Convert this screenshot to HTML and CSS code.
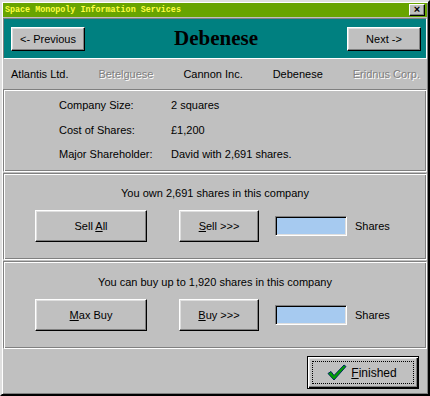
FILE: index.html
```html
<!DOCTYPE html>
<html>
<head>
<meta charset="utf-8">
<link rel="stylesheet" href="styles.css">
</head>
<body>
<div class="window">
  <div class="titlebar">
    <span class="title">Space Monopoly Information Services</span>
    <span class="close">×</span>
  </div>
  <div class="header">
    <button class="btn nav">&lt;- Previous</button>
    <h1 class="company">Debenese</h1>
    <button class="btn nav">Next -&gt;</button>
  </div>
  <div class="tabs">
    <span class="tab">Atlantis Ltd.</span>
    <span class="tab disabled">Betelguese</span>
    <span class="tab">Cannon Inc.</span>
    <span class="tab">Debenese</span>
    <span class="tab disabled">Eridnus Corp.</span>
  </div>
  <div class="panel info">
    <span class="label">Company Size:</span><span>2 squares</span>
    <span class="label">Cost of Shares:</span><span>£1,200</span>
    <span class="label">Major Shareholder:</span><span>David with 2,691 shares.</span>
  </div>
  <div class="panel trade">
    <p class="msg">You own 2,691 shares in this company</p>
    <div class="actions">
      <button class="btn big"><span>Sell <u>A</u>ll</span></button>
      <button class="btn mid"><span><u>S</u>ell &gt;&gt;&gt;</span></button>
      <span class="field"></span>
      <span class="unit">Shares</span>
    </div>
  </div>
  <div class="panel trade buy">
    <p class="msg">You can buy up to 1,920 shares in this company</p>
    <div class="actions">
      <button class="btn big"><span><u>M</u>ax Buy</span></button>
      <button class="btn mid"><span><u>B</u>uy &gt;&gt;&gt;</span></button>
      <span class="field"></span>
      <span class="unit">Shares</span>
    </div>
  </div>
  <div class="footer">
    <button class="btn default">
      <span class="focus">
        <svg class="check" width="20" height="17" viewBox="0 0 20 17">
          <path d="M1 9.5 L4 7.5 L7 11.5 L17 1 L19 2.5 L7 16 Z" fill="#00a000" stroke="#002860" stroke-width="1"/>
        </svg>
        <span><u>F</u>inished</span>
      </span>
    </button>
  </div>
</div>
</body>
</html>
```

FILE: styles.css
```css
* { box-sizing: border-box; }
html, body { margin: 0; padding: 0; }
body {
  width: 430px;
  height: 396px;
  background: #c0c0c0;
  font-family: "Liberation Sans", Arial, sans-serif;
  font-size: 11px;
  color: #000;
  overflow: hidden;
}
.window {
  width: 430px;
  height: 396px;
  border: 2px solid;
  border-color: #dfdfdf #000 #000 #dfdfdf;
  box-shadow: inset 1px 1px #fff, inset -1px -1px #808080;
  padding: 1px;
  display: flex;
  flex-direction: column;
}
.titlebar {
  height: 14px;
  flex: none;
  background: #68a400;
  display: flex;
  align-items: center;
  justify-content: space-between;
  padding: 0 2px 0 2px;
}
.title {
  font-family: "Liberation Mono", "Courier New", monospace;
  font-weight: bold;
  font-size: 8.4px;
  color: #ffff40;
}
.close {
  width: 16px;
  height: 12px;
  background: #c0c0c0;
  border: 1px solid;
  border-color: #fff #000 #000 #fff;
  box-shadow: inset -1px -1px #808080;
  font-size: 11px;
  line-height: 9px;
  text-align: center;
  font-weight: bold;
}
.header {
  flex: none;
  height: 41px;
  margin-top: 1px;
  background: #008080;
  border: 1px solid;
  border-color: #808080 #fff #fff #808080;
  display: flex;
  align-items: center;
  justify-content: space-between;
  padding: 0 5px 0 7px;
}
.company {
  margin: 0;
  font-family: "Liberation Serif", "Times New Roman", serif;
  font-size: 21px;
  font-weight: bold;
  color: #000;
}
.btn {
  font-family: "Liberation Sans", Arial, sans-serif;
  font-size: 11px;
  color: #000;
  background: #c0c0c0;
  border: 1px solid;
  border-color: #fff #000 #000 #fff;
  box-shadow: inset -1px -1px #808080, inset 1px 1px #dfdfdf;
  padding: 0;
  margin: 0;
  display: flex;
  align-items: center;
  justify-content: center;
}
.nav { width: 74px; height: 24px; }
.tabs {
  flex: none;
  height: 30px;
  display: flex;
  align-items: center;
  justify-content: space-between;
  padding: 0 7px 0 8px;
}
.disabled {
  color: #808080;
  text-shadow: 1px 1px #fff;
}
.panel {
  flex: none;
  border: 1px solid;
  border-color: #808080 #fff #fff #808080;
  box-shadow: 1px 1px #fff inset, -1px -1px #808080 inset;
}
.info {
  height: 83px;
  display: grid;
  grid-template-columns: 112px auto;
  grid-auto-rows: 24.5px;
  align-items: center;
  align-content: start;
  padding-left: 55px;
  padding-top: 3px;
}
.trade {
  height: 87px;
  margin-top: 1px;
  padding-top: 12px;
}
.buy { height: 88px; padding-top: 13px; }
.msg {
  margin: 0;
  text-align: center;
  line-height: 14px;
}
.actions {
  display: flex;
  align-items: center;
  margin-top: 10px;
  padding-left: 31px;
}
.big { width: 112px; height: 32px; }
.mid { width: 80px; height: 32px; margin-left: 32px; }
.field {
  width: 72px;
  height: 20px;
  margin-left: 16px;
  background: #a6caf0;
  border: 1px solid;
  border-color: #808080 #fff #fff #808080;
  box-shadow: inset 1px 1px #000, inset -1px -1px #dfdfdf;
}
.unit { margin-left: 8px; }
.footer {
  flex: 1;
  display: flex;
  justify-content: flex-end;
  align-items: flex-start;
  padding: 7px 8px 0 0;
}
.default {
  width: 112px;
  height: 33px;
  border: 1px solid #000;
  box-shadow: inset 1px 1px #fff, inset -1px -1px #000, inset -2px -2px #808080, inset 2px 2px #dfdfdf;
  padding: 4px;
}
.focus {
  width: 100%;
  height: 100%;
  border: 1px dotted #000;
  display: flex;
  align-items: center;
  justify-content: center;
  gap: 4px;
  font-size: 12px;
  padding-right: 2px;
}
.check { display: block; }
```
